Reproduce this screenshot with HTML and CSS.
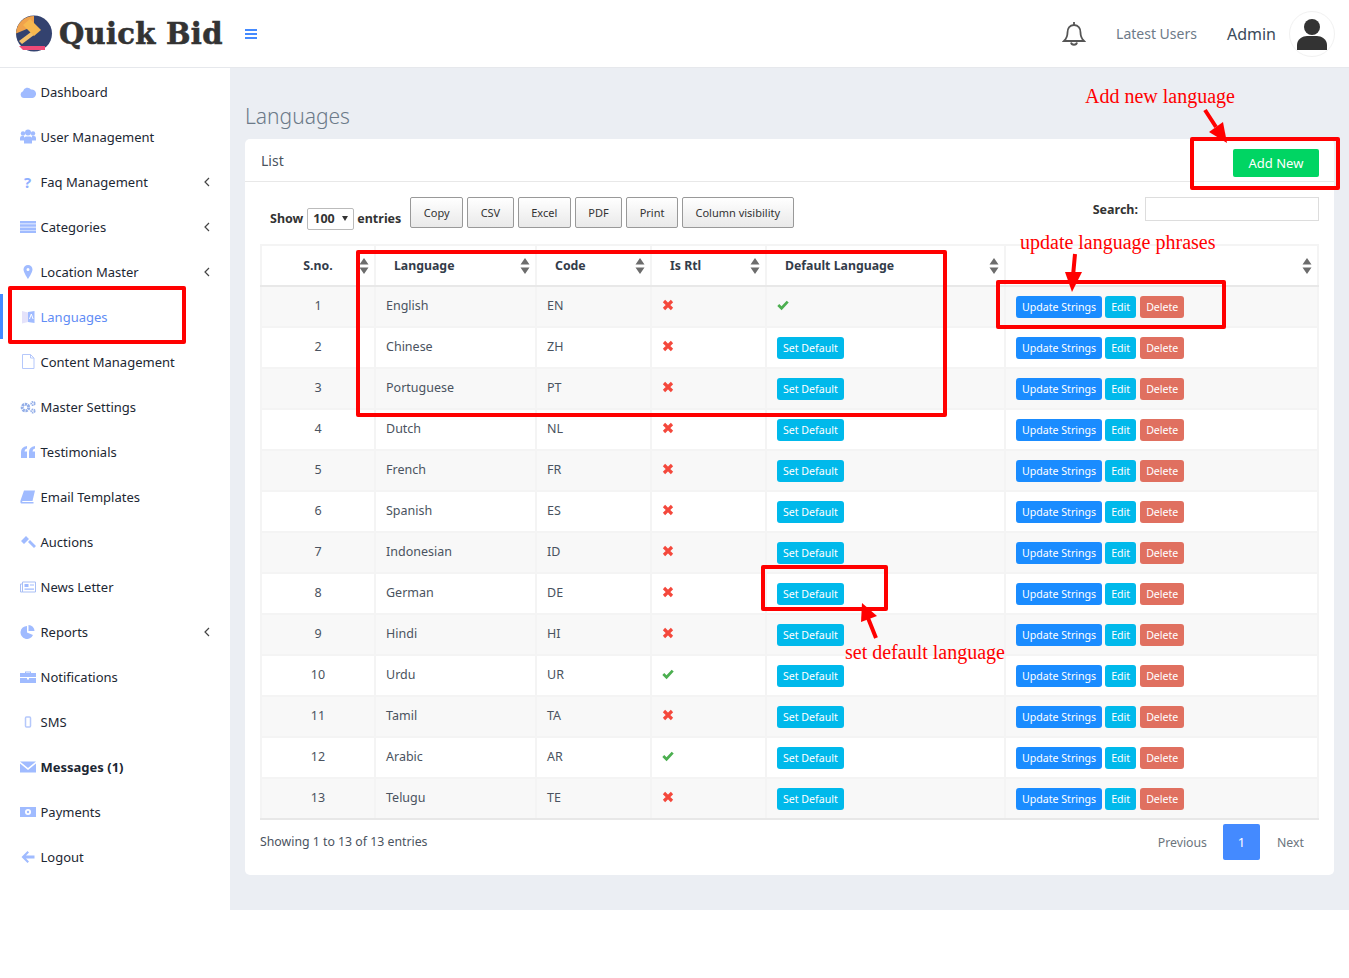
FILE: index.html

```html
<!DOCTYPE html>
<html>
<head>
  <title>Languages</title>
  <link rel="stylesheet" href="styles.css">
</head>
<body>
  <svg class="defs" width="0" height="0">
    <symbol id="cross" viewBox="0 0 12 12"><path d="M2 2l8 8M10 2l-8 8" stroke="#f4483c" stroke-width="3.200" fill="none"/></symbol>
    <symbol id="check" viewBox="0 0 14 12"><path d="M1.500 6l3.800 3.800L12.500 2" stroke="#4caf50" stroke-width="3.200" fill="none"/></symbol>
    <symbol id="sort" viewBox="0 0 10 16"><path d="M5 0l4.500 6.500h-9zM5 16l4.500-6.500h-9z" fill="#6c6c6c"/></symbol>
    <symbol id="chev" viewBox="0 0 6 10"><path d="M5 1L1 5l4 4" stroke="#444" stroke-width="1.200" fill="none"/></symbol>
  </svg>

  <header class="topbar">
    <div class="brand">
      <svg class="brand-logo" viewBox="0 0 38 36">
        <circle cx="19" cy="17.500" r="18" fill="#33426f"/>
        <path d="M19 0A18 18 0 0 0 1 17.500L19 10z" fill="#f0a24c"/>
        <path d="M8 34h22v-4H4z" fill="#ef4a78"/>
        <path d="M16 16L4 25l3 3 12-9z" fill="#f3c06a"/>
        <path d="M8 9l7-6 11 11-7 6z" fill="#f7b84f"/>
      </svg>
      <span class="brand-name">Quick Bid</span>
    </div>
    <svg class="burger" viewBox="0 0 12 10"><path d="M0 1h12M0 5h12M0 9h12" stroke="#448aff" stroke-width="2"/></svg>
    <div class="topbar-right">
      <svg class="bell" viewBox="0 0 24 26"><path d="M12 1v3M12 4c-4.500 0-6.500 3.500-6.500 7.500 0 4-1 6-3.500 8.500h20c-2.500-2.500-3.500-4.500-3.500-8.500C18.500 7.500 16.500 4 12 4zM9 21.500c.5 3 5.500 3 6 0" stroke="#555" stroke-width="1.800" fill="none"/></svg>
      <a class="latest">Latest Users</a>
      <span class="admin">Admin</span>
      <span class="avatar">
        <svg viewBox="0 0 30 32"><circle cx="15" cy="9" r="8" fill="#333"/><path d="M0 32v-5c0-6 6-9 10-9h10c4 0 10 3 10 9v5z" fill="#333"/></svg>
      </span>
    </div>
  </header>

  <div class="layout">
    <nav class="sidebar">
      <a class="nav-item"><svg class="nav-icon" viewBox="0 0 16 12"><path d="M4 12a3.500 3.500 0 0 1-1-6.800A4.500 4.500 0 0 1 11 3.500 4 4 0 0 1 12.500 12z"/></svg>Dashboard</a>
      <a class="nav-item"><svg class="nav-icon tall" viewBox="0 0 16 14"><circle cx="3" cy="4" r="2.200"/><circle cx="13" cy="4" r="2.200"/><circle cx="8" cy="3" r="3"/><path d="M0 11V8.500Q0 6.500 2 6.500h2v4.500zM16 11V8.500Q16 6.500 14 6.500h-2v4.500zM4 14V8.500q0-1.500 2-1.500h4q2 0 2 1.500V14z"/></svg>User Management</a>
      <a class="nav-item has-sub"><span class="nav-glyph">?</span>Faq Management<svg class="chev"><use href="#chev"/></svg></a>
      <a class="nav-item has-sub"><svg class="nav-icon" viewBox="0 0 16 12"><path d="M0 0h16v2.500H0zM0 3.200h16v2.500H0zM0 6.400h16v2.500H0zM0 9.600h16V12H0z"/></svg>Categories<svg class="chev"><use href="#chev"/></svg></a>
      <a class="nav-item has-sub"><svg class="nav-icon" viewBox="0 0 16 14"><path fill-rule="evenodd" d="M8 0a4.500 4.500 0 0 1 4.500 4.500C12.500 7.500 8 14 8 14S3.500 7.500 3.500 4.500A4.500 4.500 0 0 1 8 0zm0 3a1.500 1.500 0 1 0 0 3 1.500 1.500 0 0 0 0-3z"/></svg>Location Master<svg class="chev"><use href="#chev"/></svg></a>
      <a class="nav-item active"><svg class="nav-icon" viewBox="0 0 16 14"><path d="M2 1l6 1.500V12l-6 1.500z" fill="#e4e2fa"/><path d="M8 2l6.500-1v12L8 12z"/><path d="M9.500 9l1.800-5 1.800 5" stroke="#fff" fill="none"/></svg>Languages</a>
      <a class="nav-item"><svg class="nav-icon tall" viewBox="0 0 16 15"><path d="M2.500.5h8l3.500 3.500v10.500H2.500zM10.500.5V4H14" fill="none" stroke="#b5c8fb"/></svg>Content Management</a>
      <a class="nav-item"><svg class="nav-icon" viewBox="0 0 16 13"><circle cx="5.500" cy="7" r="3.300" fill="none" stroke="#93aee8" stroke-width="3" stroke-dasharray="2.200 .7"/><circle cx="13" cy="3" r="1.700" fill="none" stroke="#93aee8" stroke-width="1.800" stroke-dasharray="1.400 .6"/><circle cx="13" cy="10.500" r="1.700" fill="none" stroke="#93aee8" stroke-width="1.800" stroke-dasharray="1.400 .6"/></svg>Master Settings</a>
      <a class="nav-item"><svg class="nav-icon" viewBox="0 0 16 12"><path d="M1 12V6q0-5 6-6v2.500Q4.500 3 4.500 5.500H7V12zM9 12V6q0-5 6-6v2.500q-2.500.5-2.500 3H15V12z"/></svg>Testimonials</a>
      <a class="nav-item"><svg class="nav-icon" viewBox="0 0 16 13"><path d="M4 0h11l-2.500 10.500H3q-1.500.5-1 1h11.500v1.500H1.500Q0 13 .5 10z"/></svg>Email Templates</a>
      <a class="nav-item"><svg class="nav-icon" viewBox="0 0 16 14"><path d="M1 6l5-5 3 3-5 5zM8 7l2-2 6 6-2 2z"/></svg>Auctions</a>
      <a class="nav-item"><svg class="nav-icon" viewBox="0 0 16 11"><path d="M.5 2.500h2v8h-2zM2.500.5h13v10h-13z" fill="none" stroke="#a9bff5"/><path d="M4.500 2.500h4v3h-4zM10 3h4v1h-4zM4.500 7h9.500v1.200H4.500z"/></svg>News Letter</a>
      <a class="nav-item has-sub"><svg class="nav-icon" viewBox="0 0 16 14"><path d="M7 1a6.500 6.500 0 1 0 6 9L7 7.500z"/><path d="M8.500 0A6 6 0 0 1 14.500 6h-6z"/></svg>Reports<svg class="chev"><use href="#chev"/></svg></a>
      <a class="nav-item"><svg class="nav-icon" viewBox="0 0 16 12"><path d="M5 2V.5h6V2h5v4H0V2zM6 1.500V2h4v-.5zM0 7h7v1.500h2V7h7v5H0z"/></svg>Notifications</a>
      <a class="nav-item"><svg class="nav-icon" viewBox="0 0 16 13"><rect x="5.500" y="1.500" width="5" height="10" rx="1" fill="none" stroke="#b5c8fb" stroke-width="1.500"/></svg>SMS</a>
      <a class="nav-item bold"><svg class="nav-icon" viewBox="0 0 16 11"><path d="M0 0h16L8 6.500zM0 2l8 6.500L16 2v9H0z"/></svg>Messages (1)</a>
      <a class="nav-item"><svg class="nav-icon" viewBox="0 0 16 10"><path fill-rule="evenodd" d="M0 0h16v10H0zm8 2a3 3 0 1 0 0 6 3 3 0 0 0 0-6z"/><circle cx="8" cy="5" r="1.200"/></svg>Payments</a>
      <a class="nav-item"><svg class="nav-icon" viewBox="0 0 16 12"><path d="M7.500 0L9 1.500 6 4.500h8.500v3H6L9 10.500 7.500 12 1.500 6z"/></svg>Logout</a>
    </nav>

    <main class="content">
      <h3 class="page-title">Languages</h3>
      <section class="card">
        <div class="card-header">
          <span class="card-title">List</span>
          <a class="btn-add">Add New</a>
        </div>
        <div class="card-body">
          <div class="toolbar">
            <label class="length">Show <span class="select">100<i class="select-caret"></i></span> entries</label>
            <div class="dt-buttons">
              <button class="dt-btn">Copy</button>
              <button class="dt-btn">CSV</button>
              <button class="dt-btn">Excel</button>
              <button class="dt-btn">PDF</button>
              <button class="dt-btn">Print</button>
              <button class="dt-btn">Column visibility</button>
            </div>
            <label class="search">Search:<input type="text"></label>
          </div>

          <table class="grid">
            <colgroup><col class="c-no"><col class="c-lang"><col class="c-code"><col class="c-rtl"><col class="c-def"><col class="c-act"></colgroup>
            <thead>
              <tr>
                <th class="center">S.no.<svg class="sort"><use href="#sort"/></svg></th>
                <th>Language<svg class="sort"><use href="#sort"/></svg></th>
                <th>Code<svg class="sort"><use href="#sort"/></svg></th>
                <th>Is Rtl<svg class="sort"><use href="#sort"/></svg></th>
                <th>Default Language<svg class="sort"><use href="#sort"/></svg></th>
                <th><svg class="sort"><use href="#sort"/></svg></th>
              </tr>
            </thead>
            <tbody>
              <tr><td class="center">1</td><td>English</td><td>EN</td><td><svg class="mark"><use href="#cross"/></svg></td><td><svg class="mark"><use href="#check"/></svg></td><td><a class="btn blue">Update Strings</a><a class="btn cyan">Edit</a><a class="btn red">Delete</a></td></tr>
              <tr><td class="center">2</td><td>Chinese</td><td>ZH</td><td><svg class="mark"><use href="#cross"/></svg></td><td><a class="btn cyan">Set Default</a></td><td><a class="btn blue">Update Strings</a><a class="btn cyan">Edit</a><a class="btn red">Delete</a></td></tr>
              <tr><td class="center">3</td><td>Portuguese</td><td>PT</td><td><svg class="mark"><use href="#cross"/></svg></td><td><a class="btn cyan">Set Default</a></td><td><a class="btn blue">Update Strings</a><a class="btn cyan">Edit</a><a class="btn red">Delete</a></td></tr>
              <tr><td class="center">4</td><td>Dutch</td><td>NL</td><td><svg class="mark"><use href="#cross"/></svg></td><td><a class="btn cyan">Set Default</a></td><td><a class="btn blue">Update Strings</a><a class="btn cyan">Edit</a><a class="btn red">Delete</a></td></tr>
              <tr><td class="center">5</td><td>French</td><td>FR</td><td><svg class="mark"><use href="#cross"/></svg></td><td><a class="btn cyan">Set Default</a></td><td><a class="btn blue">Update Strings</a><a class="btn cyan">Edit</a><a class="btn red">Delete</a></td></tr>
              <tr><td class="center">6</td><td>Spanish</td><td>ES</td><td><svg class="mark"><use href="#cross"/></svg></td><td><a class="btn cyan">Set Default</a></td><td><a class="btn blue">Update Strings</a><a class="btn cyan">Edit</a><a class="btn red">Delete</a></td></tr>
              <tr><td class="center">7</td><td>Indonesian</td><td>ID</td><td><svg class="mark"><use href="#cross"/></svg></td><td><a class="btn cyan">Set Default</a></td><td><a class="btn blue">Update Strings</a><a class="btn cyan">Edit</a><a class="btn red">Delete</a></td></tr>
              <tr><td class="center">8</td><td>German</td><td>DE</td><td><svg class="mark"><use href="#cross"/></svg></td><td><a class="btn cyan">Set Default</a></td><td><a class="btn blue">Update Strings</a><a class="btn cyan">Edit</a><a class="btn red">Delete</a></td></tr>
              <tr><td class="center">9</td><td>Hindi</td><td>HI</td><td><svg class="mark"><use href="#cross"/></svg></td><td><a class="btn cyan">Set Default</a></td><td><a class="btn blue">Update Strings</a><a class="btn cyan">Edit</a><a class="btn red">Delete</a></td></tr>
              <tr><td class="center">10</td><td>Urdu</td><td>UR</td><td><svg class="mark"><use href="#check"/></svg></td><td><a class="btn cyan">Set Default</a></td><td><a class="btn blue">Update Strings</a><a class="btn cyan">Edit</a><a class="btn red">Delete</a></td></tr>
              <tr><td class="center">11</td><td>Tamil</td><td>TA</td><td><svg class="mark"><use href="#cross"/></svg></td><td><a class="btn cyan">Set Default</a></td><td><a class="btn blue">Update Strings</a><a class="btn cyan">Edit</a><a class="btn red">Delete</a></td></tr>
              <tr><td class="center">12</td><td>Arabic</td><td>AR</td><td><svg class="mark"><use href="#check"/></svg></td><td><a class="btn cyan">Set Default</a></td><td><a class="btn blue">Update Strings</a><a class="btn cyan">Edit</a><a class="btn red">Delete</a></td></tr>
              <tr><td class="center">13</td><td>Telugu</td><td>TE</td><td><svg class="mark"><use href="#cross"/></svg></td><td><a class="btn cyan">Set Default</a></td><td><a class="btn blue">Update Strings</a><a class="btn cyan">Edit</a><a class="btn red">Delete</a></td></tr>
            </tbody>
          </table>

          <div class="table-foot">
            <span class="info">Showing 1 to 13 of 13 entries</span>
            <div class="pager">
              <a class="page-link">Previous</a>
              <a class="page-num">1</a>
              <a class="page-link">Next</a>
            </div>
          </div>
        </div>
      </section>
    </main>
  </div>

  <!-- red markup drawn over the screenshot -->
  <svg class="marks" viewBox="0 0 1349 978">
    <g fill="none" stroke="#f00" stroke-width="4" stroke-linejoin="round">
      <rect x="10" y="288" width="174" height="54"/>
      <rect x="358" y="252" width="587" height="163"/>
      <rect x="998" y="282" width="226" height="45"/>
      <rect x="763" y="567" width="123" height="42"/>
      <rect x="1192" y="139" width="146" height="49"/>
      <path d="M1205 110l11 17M1075 254l-2 22M876 638l-8-20"/>
    </g>
    <g fill="#f00">
      <path d="M1227 143l-18-11 14-10z"/>
      <path d="M1072 292l-7-20h17z"/>
      <path d="M862 603l-1 19 16-6z"/>
    </g>
  </svg>
  <span class="note note-add">Add new language</span>
  <span class="note note-update">update language phrases</span>
  <span class="note note-default">set default language</span>
</body>
</html>
```

FILE: styles.css

```css
body {
  margin: 0;
  position: relative;
  font-family: "Noto Sans", sans-serif;
  font-size: 13px;
  color: #4a5360;
  background-color: #fff;
}

a {
  text-decoration: none;
}

.defs {
  position: absolute;
}

/* top bar */
.topbar {
  display: flex;
  align-items: center;
  height: 67px;
  border-bottom: 1px solid #e6e8ec;
  background-color: #fff;
}

.brand {
  display: flex;
  align-items: center;
  width: 245px;
  padding-left: 15px;
  box-sizing: border-box;
}

.brand-logo {
  width: 38px;
  height: 36px;
  margin-right: 6px;
  overflow: visible;
}

.brand-name {
  font-family: "DejaVu Serif", serif;
  font-weight: 700;
  font-size: 29px;
  letter-spacing: 0.3px;
  color: #333;
  -webkit-text-stroke: 0.6px #333;
}

.burger {
  width: 12px;
  height: 10px;
}

.topbar-right {
  display: flex;
  align-items: center;
  margin-left: auto;
  padding-right: 14px;
}

.bell {
  width: 24px;
  height: 26px;
  margin-right: 30px;
}

.latest {
  font-size: 14px;
  color: #6d7a88;
  margin-right: 30px;
}

.admin {
  font-size: 16px;
  color: #3b4a5a;
  margin-right: 13px;
}

.avatar {
  display: flex;
  align-items: center;
  justify-content: center;
  width: 46px;
  height: 46px;
  border: 1px solid #f1f1f1;
  border-radius: 50%;
  box-sizing: border-box;
}

.avatar svg {
  width: 30px;
  height: 32px;
}

/* sidebar */
.layout {
  display: flex;
  min-height: 842px;
}

.sidebar {
  width: 230px;
  flex-shrink: 0;
  padding-top: 1px;
  box-sizing: border-box;
  background-color: #fff;
}

.nav-item {
  display: flex;
  align-items: center;
  height: 45px;
  padding-left: 19.500px;
  padding-right: 20px;
  box-sizing: border-box;
  color: #1c2733;
}

.nav-item.active {
  color: #5f8cf5;
  border-left: 3px solid #448aff;
  padding-left: 16.500px;
}

.nav-item.bold {
  font-weight: 700;
}

.nav-icon {
  width: 16px;
  height: 14px;
  margin-right: 5px;
  fill: #a0bbff;
  flex-shrink: 0;
}

.nav-icon.tall {
  height: 15px;
}

.nav-glyph {
  width: 16px;
  margin-right: 5px;
  text-align: center;
  font-weight: 700;
  font-size: 15px;
  color: #8fb0ff;
}

.chev {
  width: 6px;
  height: 10px;
  margin-left: auto;
}

/* main area */
.content {
  flex: 1;
  min-width: 0;
  padding: 0 15px;
  background-color: #ebeef3;
}

.page-title {
  margin: 33px 0 8px 0;
  font-weight: 300;
  font-size: 21px;
  line-height: 30px;
  color: #6c7a89;
}

.card {
  height: 736px;
  background-color: #fff;
  border-radius: 5px;
}

.card-header {
  display: flex;
  align-items: center;
  justify-content: space-between;
  height: 42px;
  padding: 0 15px 0 16px;
  border-bottom: 1px solid #e8e8e8;
}

.card-title {
  font-size: 14px;
  color: #4a5360;
}

.btn-add {
  width: 86px;
  height: 28px;
  margin-top: 5px;
  line-height: 28px;
  text-align: center;
  color: #fff;
  background-color: #00d563;
  border-radius: 2px;
}

.card-body {
  padding: 15px;
}

.toolbar {
  display: flex;
  align-items: flex-start;
  height: 47px;
  color: #333;
}

.length {
  display: flex;
  align-items: center;
  height: 43px;
  padding-left: 10px;
  font-weight: 700;
  font-size: 12.500px;
}

.select {
  display: inline-flex;
  align-items: center;
  justify-content: space-between;
  width: 47px;
  height: 22px;
  margin: 0 3px 0 4px;
  padding: 0 5px;
  box-sizing: border-box;
  border: 1px solid #bbb;
  border-radius: 2px;
  font-weight: 700;
  color: #333;
}

.select-caret {
  border-left: 3px solid transparent;
  border-right: 3px solid transparent;
  border-top: 5px solid #333;
}

.dt-buttons {
  display: flex;
  gap: 4px;
  margin-left: 9px;
}

.dt-btn {
  height: 31px;
  padding: 0 12.500px;
  font-family: inherit;
  font-size: 11px;
  color: #333;
  border: 1px solid #999;
  border-radius: 2px;
  background: linear-gradient(#fff, #e9e9e9);
}

.search {
  display: flex;
  align-items: center;
  gap: 7px;
  margin-left: auto;
  font-weight: 700;
  font-size: 12.500px;
}

.search input {
  width: 174px;
  height: 24px;
  padding: 0;
  box-sizing: border-box;
  border: 1px solid #ddd;
}

/* table */
.grid {
  table-layout: fixed;
  border-collapse: collapse;
}

.c-no { width: 114px; }
.c-lang { width: 161px; }
.c-code { width: 115px; }
.c-rtl { width: 115px; }
.c-def { width: 239px; }
.c-act { width: 313px; }

.grid th {
  position: relative;
  height: 39px;
  padding: 0 0 0 18px;
  text-align: left;
  font-size: 12.300px;
  color: #333c4a;
  border: 2px solid #f4f4f4;
  border-bottom: 2px solid #e8e8e8;
}

.grid td {
  height: 37px;
  padding: 0 0 2px 10px;
  border: 2px solid #f4f4f4;
  color: #4a5360;
  font-size: 12.500px;
}

.grid tbody tr:nth-child(odd) {
  background-color: #f8f8f8;
}

.grid tbody tr:last-child td {
  border-bottom: 2px solid #e8e8e8;
}

.grid .center {
  text-align: center;
  padding-left: 0;
  padding-right: 0;
}

.sort {
  position: absolute;
  right: 5px;
  top: 12px;
  width: 10px;
  height: 16px;
}

.mark {
  width: 12px;
  height: 12px;
  vertical-align: -1px;
  overflow: visible;
}

.btn {
  display: inline-block;
  height: 22px;
  line-height: 22px;
  margin-top: 2px;
  margin-right: 3px;
  padding: 0 6px;
  font-size: 10.600px;
  color: #fff;
  border-radius: 3px;
  vertical-align: middle;
}

.btn.blue { background-color: #1a8cff; }
.btn.cyan { background-color: #00b9eb; }
.btn.red {
  margin-left: 1px;
  background-color: #e07060;
}

.table-foot {
  display: flex;
  align-items: center;
  justify-content: space-between;
  margin-top: 4px;
}

.info {
  margin-bottom: 2px;
  font-size: 12.300px;
  color: #4a5360;
}

.pager {
  display: flex;
  align-items: center;
  padding-right: 15px;
}

.page-link {
  font-size: 12.300px;
  color: #6c757d;
}

.page-num {
  width: 37px;
  height: 36px;
  line-height: 36px;
  margin: 0 17px 0 16px;
  text-align: center;
  color: #fff;
  background-color: #448aff;
  border-radius: 2px;
}

/* annotations */
.marks {
  position: absolute;
  left: 0;
  top: 0;
  width: 1349px;
  height: 978px;
  pointer-events: none;
}

.note {
  position: absolute;
  font-family: "Liberation Serif", serif;
  font-size: 20px;
  line-height: 24px;
  color: #f00;
  white-space: nowrap;
}

.note-add { left: 1085px; top: 84px; }
.note-update { left: 1020px; top: 230px; }
.note-default { left: 845px; top: 640px; }
```
